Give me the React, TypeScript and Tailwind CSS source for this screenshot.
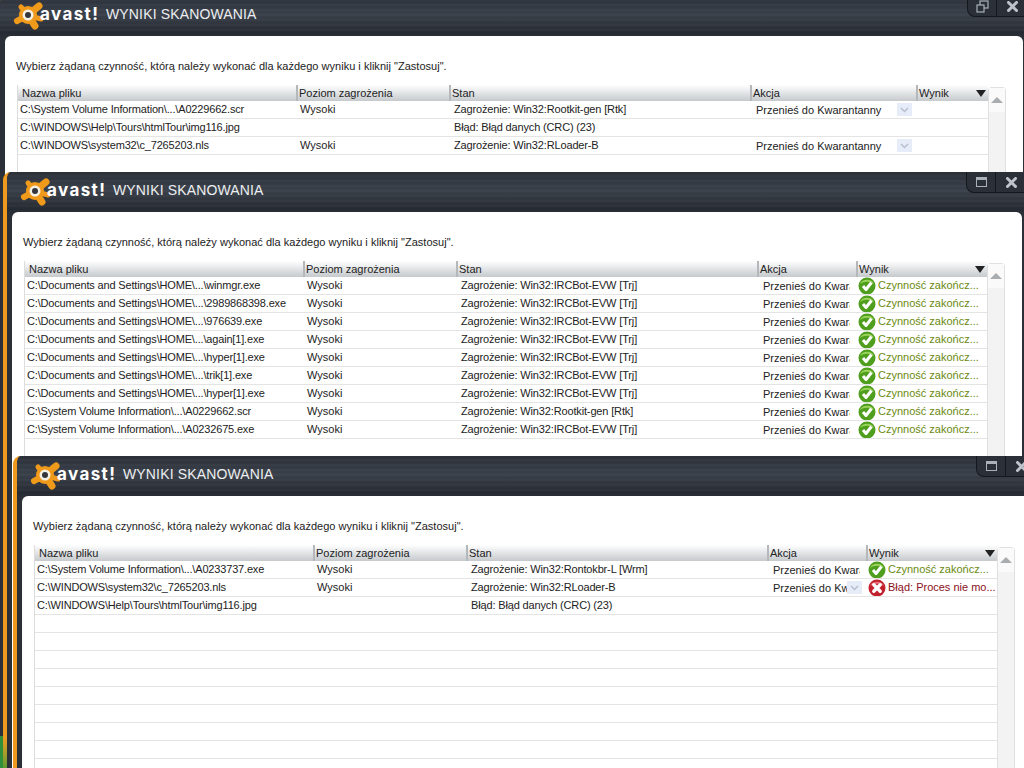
import React from 'react';

type Row = {
  file: string;
  level?: string;
  state: string;
  action?: string;
  dropdown?: boolean;
  result?: 'ok' | 'error';
};

const DOCS = 'C:\\Documents and Settings\\HOME\\...\\';
const SVI = 'C:\\System Volume Information\\...\\';
const MOVE = 'Przenieś do Kwarantanny';
const IRC = 'Zagrożenie: Win32:IRCBot-EVW [Trj]';
const IMG = 'C:\\WINDOWS\\Help\\Tours\\htmlTour\\img116.jpg';
const NLS = 'C:\\WINDOWS\\system32\\c_7265203.nls';
const CRC = 'Błąd: Błąd danych (CRC) (23)';

const ROWS_1: Row[] = [
  { file: SVI + 'A0229662.scr', level: 'Wysoki', state: 'Zagrożenie: Win32:Rootkit-gen [Rtk]', action: MOVE, dropdown: true },
  { file: IMG, state: CRC },
  { file: NLS, level: 'Wysoki', state: 'Zagrożenie: Win32:RLoader-B', action: MOVE, dropdown: true },
];

const ROWS_2: Row[] = [
  ...['winmgr.exe', '2989868398.exe', '976639.exe', 'again[1].exe', 'hyper[1].exe', 'trik[1].exe', 'hyper[1].exe'].map(
    (f): Row => ({ file: DOCS + f, level: 'Wysoki', state: IRC, action: MOVE, result: 'ok' }),
  ),
  { file: SVI + 'A0229662.scr', level: 'Wysoki', state: 'Zagrożenie: Win32:Rootkit-gen [Rtk]', action: MOVE, result: 'ok' },
  { file: SVI + 'A0232675.exe', level: 'Wysoki', state: IRC, action: MOVE, result: 'ok' },
];

const ROWS_3: Row[] = [
  { file: SVI + 'A0233737.exe', level: 'Wysoki', state: 'Zagrożenie: Win32:Rontokbr-L [Wrm]', action: MOVE, result: 'ok' },
  { file: NLS, level: 'Wysoki', state: 'Zagrożenie: Win32:RLoader-B', action: MOVE, dropdown: true, result: 'error' },
  { file: IMG, state: CRC },
];

function Logo() {
  return (
    <svg width="36" height="34" viewBox="0 0 36 34" className="mt-[4px] shrink-0">
      <g stroke="#f09a1c" strokeLinecap="round" fill="none">
        <path d="M17 16 L10 8" strokeWidth="5" />
        <path d="M17 16 L28 7" strokeWidth="7" />
        <path d="M17 16 L6 22" strokeWidth="6" />
        <path d="M17 16 L24 27" strokeWidth="7" />
        <path d="M19 17 L30 20" strokeWidth="5" />
      </g>
      <circle cx="17" cy="16" r="9" fill="#f09a1c" />
      <circle cx="17" cy="16" r="5.5" fill="#f5f0e4" />
      <circle cx="17" cy="16" r="3" fill="#33363c" />
    </svg>
  );
}

function ResultIcon({ kind }: { kind: 'ok' | 'error' }) {
  const ok = kind === 'ok';
  return (
    <svg width="18" height="18" viewBox="0 0 18 18" className="shrink-0">
      <circle cx="9" cy="9" r="8.5" fill={ok ? '#4f9e1e' : '#c2202c'} />
      <path d="M2 7 A7.5 6.5 0 0 1 16 7 A9 6 0 0 0 2 7" fill={ok ? '#9ad25a' : '#e4707a'} />
      {ok ? (
        <path d="M5 9 L8 12.5 L13.5 5.5" fill="none" stroke="#fff" strokeWidth="3" strokeLinejoin="round" />
      ) : (
        <path d="M5.8 5.8 L12.2 12.2 M12.2 5.8 L5.8 12.2" fill="none" stroke="#fff" strokeWidth="3.4" strokeLinecap="round" />
      )}
    </svg>
  );
}

function WindowButtons({ restored }: { restored?: boolean }) {
  return (
    <div className="flex h-[21px] w-[61px] shrink-0 rounded-bl-[8px] border-b border-l border-[#14171c] bg-[#2b3038]">
      <div className="flex w-[29px] items-center justify-center border-r border-[#14171c]">
        {restored ? (
          <svg width="13" height="13" viewBox="0 0 13 13" fill="none" stroke="#aab1b9" strokeWidth="1.2">
            <rect x="4" y="1" width="8" height="7" />
            <rect x="1" y="5" width="7" height="7" fill="#2b3038" />
          </svg>
        ) : (
          <div className="h-[10px] w-[11px] border border-t-[3px] border-[#aab1b9]" />
        )}
      </div>
      <div className="flex flex-1 items-center justify-center">
        <svg width="11" height="11" viewBox="0 0 11 11">
          <path d="M1.5 1.5 L9.5 9.5 M9.5 1.5 L1.5 9.5" stroke="#bfc4ca" strokeWidth="3" strokeLinecap="round" />
        </svg>
      </div>
    </div>
  );
}

function Dropdown() {
  return (
    <div className="absolute right-[4px] top-[2px] flex h-[13px] w-[15px] items-center justify-center bg-[#e6edf8]">
      <svg width="9" height="6" viewBox="0 0 9 6" fill="none" stroke="#b4bfcf" strokeWidth="1.5">
        <path d="M1 1 L4.5 4.5 L8 1" />
      </svg>
    </div>
  );
}

function Table({ rows, cols, total }: { rows: Row[]; cols: string; total: number }) {
  const blanks = Array.from({ length: total - rows.length });
  return (
    <div className="min-w-0 flex-1 border-l border-[#dddddd]">
      <div className={'relative grid h-[16px] rounded-tl-[3px] bg-gradient-to-b from-[#ffffff] to-[#c6cacd] leading-[16px] text-[#222222] ' + cols}>
        <div className="pl-[4px]">Nazwa pliku</div>
        <div className="border-l-2 border-[#b5b8bb] pl-[1px]">Poziom zagrożenia</div>
        <div className="border-l-2 border-[#b5b8bb] pl-[1px]">Stan</div>
        <div className="border-l-2 border-[#b5b8bb] pl-[1px]">Akcja</div>
        <div className="border-l-2 border-[#b5b8bb] pl-[1px]">Wynik</div>
        <div className="absolute right-[2px] top-[5px] h-0 w-0 border-x-[5px] border-t-[7px] border-x-transparent border-t-[#222222]" />
      </div>
      {rows.map((r, i) => (
        <div key={i} className={'grid h-[18px] border-b border-[#e4e4e4] leading-[16px] ' + cols}>
          <div className="overflow-hidden whitespace-nowrap pl-[2px] tracking-[-0.17px]">{r.file}</div>
          <div className="pl-[4px]">{r.level}</div>
          <div className="pl-[5px] tracking-[-0.15px]">{r.state}</div>
          <div className="relative overflow-hidden pl-[6px] pr-[6px] pt-[1px]">
            <div className="overflow-hidden whitespace-nowrap">{r.action}</div>
            {r.dropdown && <Dropdown />}
          </div>
          <div className="flex items-start gap-[2px] overflow-hidden whitespace-nowrap pl-[2px]">
            {r.result && <ResultIcon kind={r.result} />}
            {r.result === 'ok' && <span className="text-[#6a8a10]">Czynność zakończ...</span>}
            {r.result === 'error' && <span className="text-[#8c1022]">Błąd: Proces nie mo...</span>}
          </div>
        </div>
      ))}
      {blanks.map((_, i) => (
        <div key={i} className="h-[18px] border-b border-[#e4e4e4]" />
      ))}
    </div>
  );
}

function Scrollbar() {
  return (
    <div className="mt-[2px] flex w-[18px] shrink-0 flex-col rounded-t-[4px] border-x border-t border-[#e0e0e0] bg-[#f3f3f3]">
      <div className="flex h-[24px] items-center justify-center bg-[#fafafa]">
        <div className="h-0 w-0 border-x-[6px] border-b-[6px] border-x-transparent border-b-[#a9adb0]" />
      </div>
    </div>
  );
}

function AvastWindow({ frame, rows, cols, total, restored }: { frame: string; rows: Row[]; cols: string; total: number; restored?: boolean }) {
  return (
    <div className={'absolute flex flex-col overflow-hidden rounded-tl-[8px] border-l-4 border-[#ee9a1e] bg-[#2a2f38] ' + frame}>
      <div className="flex h-[40px] shrink-0 justify-between bg-[repeating-linear-gradient(0deg,rgba(255,255,255,0.025)_0_2px,transparent_2px_5px),linear-gradient(180deg,#2b3039,#3a404a_45%,#23272f)]">
        <div className="flex h-[36px] items-center pl-[11px]">
          <Logo />
          <span className="ml-[-7px] mt-[1px] w-[66px] font-['Inter',sans-serif] text-[17px] font-bold tracking-[1.4px] text-white">avast!</span>
          <span className="text-[14px] tracking-[0.15px] text-[#eceef0]">WYNIKI SKANOWANIA</span>
        </div>
        <WindowButtons restored={restored} />
      </div>
      <div className="mx-[5px] flex-1 rounded-t-[6px] bg-white px-[12px] text-[#222222]">
        <div className="ml-[-1px] mt-[23px] h-[14px] leading-[14px] tracking-[0.02px]">Wybierz żądaną czynność, którą należy wykonać dla każdego wyniku i kliknij "Zastosuj".</div>
        <div className="mt-[12px] flex pr-[5px]">
          <Table rows={rows} cols={cols} total={total} />
          <Scrollbar />
        </div>
      </div>
    </div>
  );
}

export default function App() {
  return (
    <div className="relative h-[768px] w-[1024px] overflow-hidden bg-[#2f8f3a] font-['Liberation_Sans',Arial,sans-serif] text-[11px]">
      <AvastWindow
        frame="left-[-4px] top-[-4px] h-[740px] w-[1032px]"
        rows={ROWS_1}
        cols="grid-cols-[278px_153px_301px_166px_1fr]"
        total={6}
        restored
      />
      <AvastWindow
        frame="left-[3px] top-[172px] h-[600px] w-[1024px]"
        rows={ROWS_2}
        cols="grid-cols-[278px_153px_301px_99px_1fr]"
        total={11}
      />
      <div className="absolute left-[3px] top-[738px] h-[30px] w-[4px] bg-gradient-to-b from-[#ee9a1e] to-[#5a9a30]" />
      <AvastWindow
        frame="left-[13px] top-[456px] h-[400px] w-[1024px]"
        rows={ROWS_3}
        cols="grid-cols-[278px_153px_301px_99px_1fr]"
        total={14}
      />
    </div>
  );
}
